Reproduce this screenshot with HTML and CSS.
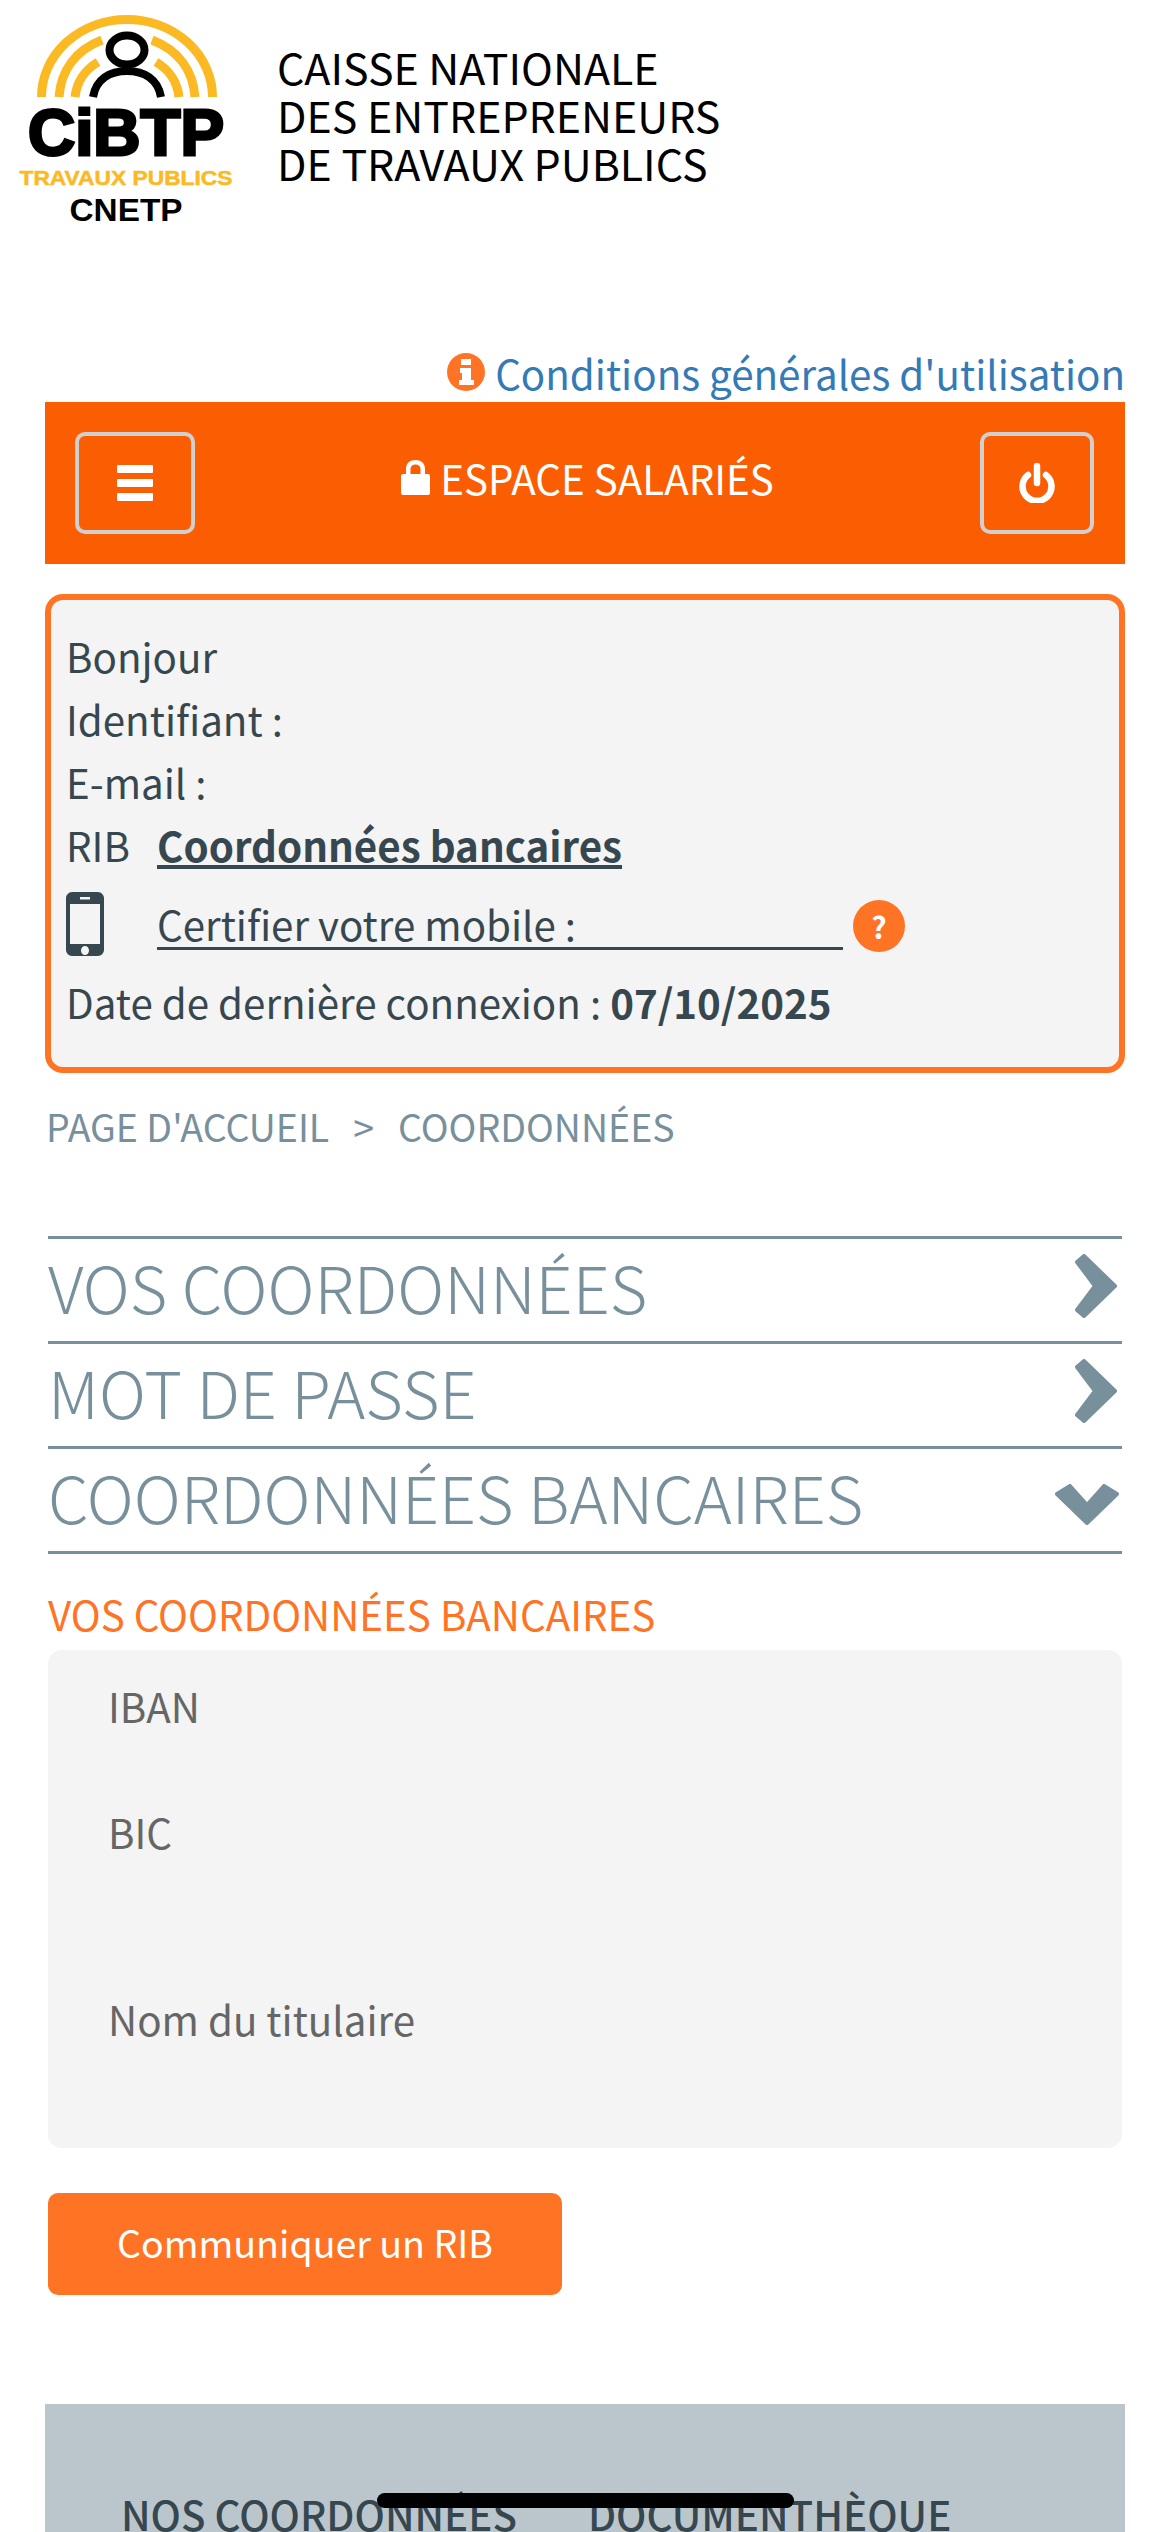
FILE: index.html
```html
<!DOCTYPE html>
<html lang="fr">
<head>
    <meta charset="UTF-8">
    <meta name="viewport" content="width=device-width, initial-scale=1.0">
    <title>CNETP - Espace salariés</title>
    <link rel="stylesheet" href="styles.css">
</head>
<body>

<header class="site-header">
    <svg class="logo" viewBox="0 0 260 240" width="260" height="240">
        <g class="logo-arc">
            <path d="M41.500 97 A85.500 77.500 0 0 1 212.500 97"/>
            <path d="M59 97 C61 70 76 50 102 40"/>
            <path d="M152 40 C178 50 193 70 195 97"/>
            <path d="M75 97 C77 80 85 70 98 62"/>
            <path d="M156 62 C169 70 177 80 179 97"/>
        </g>
        <g class="logo-person">
            <ellipse cx="127" cy="50" rx="17.500" ry="14.500"/>
            <path d="M93 97 C96 79 110 71 127 71 C144 71 158 79 161 97"/>
        </g>
        <text class="logo-cibtp" x="126" y="155" text-anchor="middle" textLength="196" lengthAdjust="spacingAndGlyphs">CiBTP</text>
        <text class="logo-sub" x="126" y="185" text-anchor="middle" textLength="213" lengthAdjust="spacingAndGlyphs">TRAVAUX PUBLICS</text>
        <text class="logo-cnetp" x="126" y="221" text-anchor="middle" textLength="113" lengthAdjust="spacingAndGlyphs">CNETP</text>
    </svg>
    <div class="site-name">CAISSE NATIONALE<br>DES ENTREPRENEURS<br>DE TRAVAUX PUBLICS</div>
</header>

<div class="cgu">
    <svg class="icon-info" viewBox="0 0 38 38" width="38" height="38">
        <circle cx="19" cy="19" r="19"/>
        <rect class="cut" x="14" y="6" width="10" height="6"/>
        <path class="cut" d="M13 15 H24 V27 H27 V32 H12 V27 H15 V20 H13 Z"/>
    </svg>
    <a href="#">Conditions générales d'utilisation</a>
</div>

<nav class="top-bar">
    <button class="bar-btn menu-btn" aria-label="Menu">
        <svg viewBox="0 0 36 36" width="36" height="36">
            <rect y="0" width="36" height="8" rx="1"/>
            <rect y="14" width="36" height="8" rx="1"/>
            <rect y="28" width="36" height="8" rx="1"/>
        </svg>
    </button>
    <div class="bar-title">
        <svg class="icon-lock" viewBox="0 0 29 36" width="29" height="36">
            <path d="M5 15 V10 C5 4 9 1 14.500 1 C20 1 24 4 24 10 V15 H19.500 V10 C19.500 7 17.500 5.500 14.500 5.500 C11.500 5.500 9.500 7 9.500 10 V15 Z"/>
            <rect y="15" width="29" height="21" rx="2"/>
        </svg>
        <span class="bar-label">ESPACE SALARIÉS</span>
    </div>
    <button class="bar-btn power-btn" aria-label="Déconnexion">
        <svg viewBox="0 0 36 40" width="36" height="40">
            <path class="power-ring" d="M9 12 A14.500 14.500 0 1 0 27 12"/>
            <path class="power-ring" d="M18 3 V20"/>
        </svg>
    </button>
</nav>

<section class="user-box">
    <div class="user-row">Bonjour</div>
    <div class="user-row">Identifiant :</div>
    <div class="user-row">E-mail :</div>
    <div class="user-row"><span class="row-label">RIB</span><a class="rib-link" href="#">Coordonnées bancaires</a></div>
    <div class="user-row mobile-row">
        <span class="row-label">
            <svg class="icon-mobile" viewBox="0 0 38 64" width="38" height="64">
                <path fill-rule="evenodd" d="M6 0 H32 C35 0 38 3 38 6 V58 C38 61 35 64 32 64 H6 C3 64 0 61 0 58 V6 C0 3 3 0 6 0 Z M4 12 V52 H34 V12 Z M14 5 V7.500 H24 V5 Z M19 54 A4 4.500 0 1 0 19 63 A4 4.500 0 1 0 19 54 Z"/>
            </svg>
        </span>
        <a class="mobile-link" href="#">Certifier votre mobile :</a>
        <span class="help-badge">?</span>
    </div>
    <div class="user-row">Date de dernière connexion :&nbsp;<strong>07/10/2025</strong></div>
</section>

<div class="breadcrumb">
    <a href="#">PAGE D'ACCUEIL</a><span class="crumb-sep">&gt;</span><a href="#">COORDONNÉES</a>
</div>

<section class="accordion">
    <div class="acc-item">
        <span class="acc-title">VOS COORDONNÉES</span>
        <svg class="chevron chevron-right" viewBox="0 0 42 64" width="42" height="64"><path d="M9 2 L40 32 L9 62 L2 56 L20 32 L2 8 Z"/></svg>
    </div>
    <div class="acc-item">
        <span class="acc-title">MOT DE PASSE</span>
        <svg class="chevron chevron-right" viewBox="0 0 42 64" width="42" height="64"><path d="M9 2 L40 32 L9 62 L2 56 L20 32 L2 8 Z"/></svg>
    </div>
    <div class="acc-item">
        <span class="acc-title">COORDONNÉES BANCAIRES</span>
        <svg class="chevron chevron-down" viewBox="0 0 64 41" width="64" height="41"><path d="M2 10 L15 2 L32 21 L49 2 L62 10 L32 39 Z"/></svg>
    </div>
</section>

<h2 class="bank-title">VOS COORDONNÉES BANCAIRES</h2>
<div class="bank-panel">
    <div class="bank-label iban">IBAN</div>
    <div class="bank-label bic">BIC</div>
    <div class="bank-label holder">Nom du titulaire</div>
</div>

<button class="rib-btn">Communiquer un RIB</button>

<footer class="site-footer">
    <a href="#">NOS COORDONNÉES</a>
    <a href="#">DOCUMENTHÈQUE</a>
</footer>

<div class="home-indicator"></div>

</body>
</html>
```

FILE: styles.css
```css
html, body {
    margin: 0;
    height: 2532px;
    overflow: hidden;
    background: white;
}
body {
    font-family: "Noto Sans CJK SC", "Noto Sans", sans-serif;
    font-size: 40.3px;
    color: #37474f;
    position: relative;
}
a {
    color: inherit;
    text-decoration: none;
}

/* header */
.site-header {
    display: flex;
    align-items: center;
    height: 240px;
    color: black;
}
.logo {
    flex: none;
}
.logo-arc path {
    fill: none;
    stroke: #fbb923;
    stroke-width: 9;
}
.logo-person ellipse, .logo-person path {
    fill: none;
    stroke: black;
    stroke-width: 8;
}
.logo-cibtp {
    font-family: "Liberation Sans", sans-serif;
    font-weight: bold;
    font-size: 64px;
    fill: black;
    stroke: black;
    stroke-width: 3;
}
.logo-sub {
    font-family: "Liberation Sans", sans-serif;
    font-weight: bold;
    font-size: 21px;
    fill: #fbb923;
    stroke: #fbb923;
    stroke-width: 0.5;
}
.logo-cnetp {
    font-family: "Liberation Sans", sans-serif;
    font-weight: bold;
    font-size: 31px;
    fill: black;
}
.site-name {
    margin-left: 17px;
    margin-top: -12px;
    font-size: 42.9px;
    line-height: 48px;
}

/* conditions link */
.cgu {
    display: flex;
    justify-content: flex-end;
    align-items: center;
    gap: 10px;
    height: 162px;
    padding-top: 102px;
    box-sizing: border-box;
    margin-right: 45px;
    color: #337ab7;
}
.icon-info circle {
    fill: #ff7424;
}
.icon-info .cut {
    fill: white;
}

/* orange bar */
.top-bar {
    display: flex;
    align-items: center;
    justify-content: space-between;
    height: 162px;
    margin: 0 45px;
    padding: 0 31px 0 30px;
    box-sizing: border-box;
    background: #fb5d02;
    color: white;
}
.bar-btn {
    display: flex;
    align-items: center;
    justify-content: center;
    height: 102px;
    padding: 0;
    background: transparent;
    border: 4px solid #d0d0d0;
    border-radius: 10px;
    box-sizing: border-box;
}
.menu-btn {
    width: 120px;
}
.power-btn {
    width: 114px;
}
.menu-btn rect {
    fill: white;
}
.power-ring {
    fill: none;
    stroke: white;
    stroke-width: 6.5;
    stroke-linecap: round;
}
.bar-title {
    display: flex;
    align-items: center;
    gap: 10px;
}
.bar-label {
    margin-top: -12px;
}
.icon-lock {
    fill: white;
    margin-top: -12px;
}

/* user box */
.user-box {
    margin: 30px 45px 0;
    padding: 24px 15px 0;
    height: 479px;
    box-sizing: border-box;
    background: #f4f4f4;
    border: 6px solid #ff7424;
    border-radius: 18px;
}
.user-row {
    display: flex;
    align-items: center;
    height: 63px;
}
.row-label {
    display: block;
    width: 91px;
    flex: none;
}
.rib-link {
    font-weight: bold;
    text-decoration: underline;
}
.mobile-row {
    height: 94px;
}
.icon-mobile {
    display: block;
    fill: #37474f;
    margin-top: 2px;
}
.mobile-link {
    display: block;
    width: 686px;
    line-height: 46px;
    border-bottom: 3px solid #37474f;
    margin-top: 4px;
}
.help-badge {
    display: flex;
    align-items: center;
    justify-content: center;
    width: 52px;
    height: 52px;
    margin-left: 10px;
    margin-top: 6px;
    border-radius: 50%;
    background: #ff7424;
    color: white;
    font-size: 30px;
    font-weight: bold;
}

/* breadcrumb */
.breadcrumb {
    display: flex;
    align-items: center;
    margin-left: 46px;
    height: 108px;
    padding-bottom: 4px;
    box-sizing: border-box;
    font-size: 37.5px;
    color: #78909c;
}
.crumb-sep {
    margin: 0 24px;
}

/* accordion */
.accordion {
    margin: 55px 48px 0;
    border-top: 3px solid #78909c;
}
.acc-item {
    display: flex;
    align-items: center;
    justify-content: space-between;
    height: 105px;
    box-sizing: border-box;
    border-bottom: 3px solid #78909c;
    color: #78909c;
}
.acc-title {
    font-size: 64.7px;
    font-weight: 300;
    line-height: 100px;
    margin-top: -8px;
}
.chevron {
    fill: #78909c;
    stroke: #78909c;
    stroke-width: 4;
    stroke-linejoin: round;
}
.chevron-right {
    margin-top: -9px;
    margin-right: 5px;
}
.chevron-down {
    margin-top: 9px;
    margin-right: 3px;
}

/* bank details */
.bank-title {
    margin: 30px 0 0 48px;
    font-size: 40.3px;
    font-weight: normal;
    line-height: 60px;
    color: #ff7424;
}
.bank-panel {
    margin: 6px 48px 0;
    height: 498px;
    padding-left: 60px;
    background: #f4f4f4;
    border-radius: 14px;
    color: #666666;
}
.bank-label {
    line-height: 60px;
}
.iban {
    padding-top: 26px;
}
.bic {
    margin-top: 66px;
}
.holder {
    margin-top: 127px;
}
.rib-btn {
    display: block;
    width: 514px;
    height: 102px;
    margin: 45px 0 0 48px;
    padding: 0 0 6px;
    background: #ff7424;
    color: white;
    border: none;
    border-radius: 10px;
    font-family: inherit;
    font-size: 37.6px;
}

/* footer */
.site-footer {
    display: flex;
    gap: 71px;
    margin: 109px 45px 0;
    height: 129px;
    padding: 80px 0 0 76px;
    box-sizing: border-box;
    overflow: hidden;
    background: #bbc6cc;
    font-weight: 500;
    line-height: 60px;
}

.home-indicator {
    position: absolute;
    left: 377px;
    top: 2493px;
    width: 417px;
    height: 15px;
    border-radius: 8px;
    background: black;
}
```
